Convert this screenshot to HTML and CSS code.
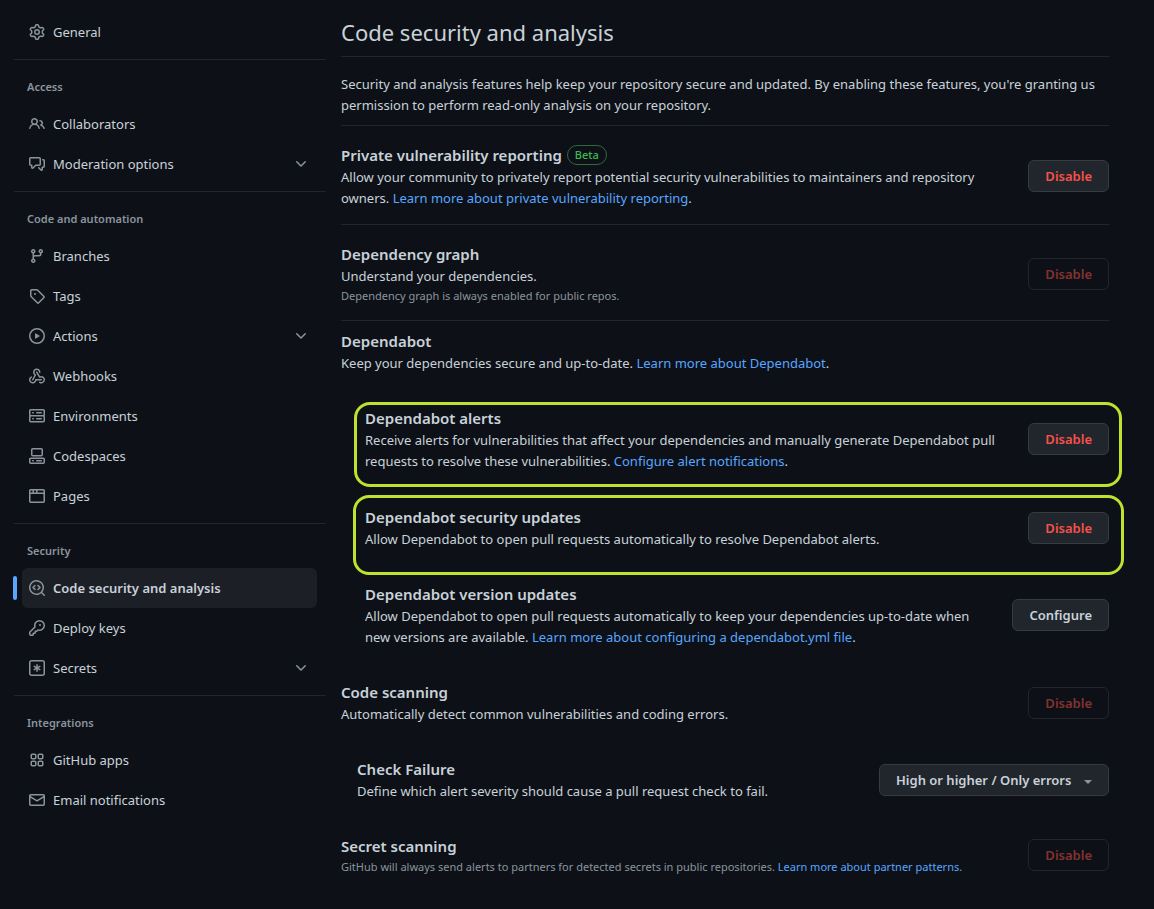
FILE: index.html
```
<!DOCTYPE html>
<html lang="en">
<head>
    <meta charset="UTF-8">
    <meta name="viewport" content="width=device-width, initial-scale=1.0">
    <title>Code security and analysis</title>
    <link rel="stylesheet" href="styles.css">
</head>
<body>
    <div class="layout">
        <nav class="sidebar" aria-label="Settings">
            <ul>
                <li><a href="#"><svg class="icon" viewBox="0 0 16 16"><path d="M8 0a8.2 8.2 0 0 1 .701.031C9.444.095 9.99.645 10.16 1.29l.288 1.107c.018.066.079.158.212.224.231.114.454.243.668.386.123.082.233.09.299.071l1.103-.303c.644-.176 1.392.021 1.82.63.27.385.506.792.704 1.218.315.675.111 1.422-.364 1.891l-.814.806c-.049.048-.098.147-.088.294.016.257.016.515 0 .772-.01.147.038.246.088.294l.814.806c.475.469.679 1.216.364 1.891a7.977 7.977 0 0 1-.704 1.217c-.428.61-1.176.807-1.82.63l-1.102-.302c-.067-.019-.177-.011-.3.071a5.909 5.909 0 0 1-.668.386c-.133.066-.194.158-.211.224l-.29 1.106c-.168.646-.715 1.196-1.458 1.26a8.006 8.006 0 0 1-1.402 0c-.743-.064-1.289-.614-1.458-1.26l-.289-1.106c-.018-.066-.079-.158-.212-.224a5.738 5.738 0 0 1-.668-.386c-.123-.082-.233-.09-.299-.071l-1.103.303c-.644.176-1.392-.021-1.82-.63a8.12 8.12 0 0 1-.704-1.218c-.315-.675-.111-1.422.363-1.891l.815-.806c.05-.048.098-.147.088-.294a6.214 6.214 0 0 1 0-.772c.01-.147-.038-.246-.088-.294l-.815-.806C.635 6.045.431 5.298.746 4.623a7.92 7.92 0 0 1 .704-1.217c.428-.61 1.176-.807 1.82-.63l1.102.302c.067.019.177.011.3-.071.214-.143.437-.272.668-.386.133-.066.194-.158.211-.224l.29-1.106C6.009.645 6.556.095 7.299.03 7.53.01 7.764 0 8 0Zm-.571 1.525c-.036.003-.108.036-.137.146l-.289 1.105c-.147.561-.549.967-.998 1.189-.173.086-.34.183-.5.29-.417.278-.97.423-1.529.27l-1.103-.303c-.109-.03-.175.016-.195.045-.22.312-.412.644-.573.99-.014.031-.021.11.059.19l.815.806c.411.406.562.957.53 1.456a4.709 4.709 0 0 0 0 .582c.032.499-.119 1.05-.53 1.456l-.815.806c-.081.08-.073.159-.059.19.162.346.353.677.573.989.02.03.085.076.195.046l1.102-.303c.56-.153 1.113-.008 1.53.27.161.107.328.204.501.29.447.222.85.629.997 1.189l.289 1.105c.029.109.101.143.137.146a6.6 6.6 0 0 0 1.142 0c.036-.003.108-.036.137-.146l.289-1.105c.147-.561.549-.967.998-1.189.173-.086.34-.183.5-.29.417-.278.97-.423 1.529-.27l1.103.303c.109.029.175-.016.195-.045.22-.313.411-.644.573-.99.014-.031.021-.11-.059-.19l-.815-.806c-.411-.406-.562-.957-.53-1.456a4.709 4.709 0 0 0 0-.582c-.032-.499.119-1.05.53-1.456l.815-.806c.081-.08.073-.159.059-.19a6.464 6.464 0 0 0-.573-.989c-.02-.03-.085-.076-.195-.046l-1.102.303c-.56.153-1.113.008-1.53-.27a4.44 4.44 0 0 0-.501-.29c-.447-.222-.85-.629-.997-1.189l-.289-1.105c-.029-.11-.101-.143-.137-.146a6.6 6.6 0 0 0-1.142 0ZM11 8a3 3 0 1 1-6 0 3 3 0 0 1 6 0ZM9.5 8a1.5 1.5 0 1 0-3.001.001A1.5 1.5 0 0 0 9.5 8Z"/></svg>General</a></li>
            </ul>

            <h2>Access</h2>
            <ul>
                <li><a href="#"><svg class="icon" viewBox="0 0 16 16"><path d="M2 5.5a3.5 3.5 0 1 1 5.898 2.549 5.508 5.508 0 0 1 3.034 4.084.75.75 0 1 1-1.482.235 4.001 4.001 0 0 0-7.9 0 .75.75 0 0 1-1.482-.236A5.507 5.507 0 0 1 3.102 8.05 3.493 3.493 0 0 1 2 5.5ZM11 4a3.001 3.001 0 0 1 2.22 5.018 5.01 5.01 0 0 1 2.56 3.012.749.749 0 0 1-.885.954.752.752 0 0 1-.549-.514 3.507 3.507 0 0 0-2.522-2.372.75.75 0 0 1-.574-.73v-.352a.75.75 0 0 1 .416-.672A1.5 1.5 0 0 0 11 5.5.75.75 0 0 1 11 4Zm-5.5-.5a2 2 0 1 0-.001 3.999A2 2 0 0 0 5.5 3.5Z"/></svg>Collaborators</a></li>
                <li><a href="#"><svg class="icon" viewBox="0 0 16 16"><path d="M1.75 1h8.5c.966 0 1.75.784 1.75 1.75v5.5A1.75 1.75 0 0 1 10.25 10H7.061l-2.574 2.573A1.458 1.458 0 0 1 2 11.543V10h-.25A1.75 1.75 0 0 1 0 8.25v-5.5C0 1.784.784 1 1.75 1ZM1.5 2.75v5.5c0 .138.112.25.25.25h1a.75.75 0 0 1 .75.75v2.19l2.72-2.72a.749.749 0 0 1 .53-.22h3.5a.25.25 0 0 0 .25-.25v-5.5a.25.25 0 0 0-.25-.25h-8.5a.25.25 0 0 0-.25.25Zm13 2a.25.25 0 0 0-.25-.25h-.5a.75.75 0 0 1 0-1.5h.5c.966 0 1.75.784 1.75 1.75v5.5A1.75 1.75 0 0 1 14.25 12H14v1.543a1.458 1.458 0 0 1-2.487 1.03L9.22 12.28a.749.749 0 0 1 .326-1.275.749.749 0 0 1 .734.215l2.22 2.22v-2.19a.75.75 0 0 1 .75-.75h1a.25.25 0 0 0 .25-.25Z"/></svg>Moderation options<svg class="icon chevron" viewBox="0 0 16 16"><path d="M12.78 5.22a.749.749 0 0 1 0 1.06l-4.25 4.25a.749.749 0 0 1-1.06 0L3.22 6.28a.749.749 0 1 1 1.06-1.06L8 8.939l3.72-3.719a.749.749 0 0 1 1.06 0Z"/></svg></a></li>
            </ul>

            <h2>Code and automation</h2>
            <ul>
                <li><a href="#"><svg class="icon" viewBox="0 0 16 16"><path d="M9.5 3.25a2.25 2.25 0 1 1 3 2.122V6A2.5 2.5 0 0 1 10 8.5H6a1 1 0 0 0-1 1v1.128a2.251 2.251 0 1 1-1.5 0V5.372a2.25 2.25 0 1 1 1.5 0v1.836A2.493 2.493 0 0 1 6 7h4a1 1 0 0 0 1-1v-.628A2.25 2.25 0 0 1 9.5 3.25Zm-6 0a.75.75 0 1 0 1.5 0 .75.75 0 0 0-1.5 0Zm8.25-.75a.75.75 0 1 0 0 1.5.75.75 0 0 0 0-1.5ZM4.25 12a.75.75 0 1 0 0 1.5.75.75 0 0 0 0-1.5Z"/></svg>Branches</a></li>
                <li><a href="#"><svg class="icon" viewBox="0 0 16 16"><path d="M1 7.775V2.75C1 1.784 1.784 1 2.75 1h5.025c.464 0 .91.184 1.238.513l6.25 6.25a1.75 1.75 0 0 1 0 2.474l-5.026 5.026a1.75 1.75 0 0 1-2.474 0l-6.25-6.25A1.752 1.752 0 0 1 1 7.775Zm1.5 0c0 .066.026.13.073.177l6.25 6.25a.25.25 0 0 0 .354 0l5.025-5.025a.25.25 0 0 0 0-.354l-6.25-6.25a.25.25 0 0 0-.177-.073H2.75a.25.25 0 0 0-.25.25ZM6 5a1 1 0 1 1 0 2 1 1 0 0 1 0-2Z"/></svg>Tags</a></li>
                <li><a href="#"><svg class="icon" viewBox="0 0 16 16"><path d="M8 0a8 8 0 1 1 0 16A8 8 0 0 1 8 0ZM1.5 8a6.5 6.5 0 1 0 13 0 6.5 6.5 0 0 0-13 0Zm4.879-2.773 4.264 2.559a.25.25 0 0 1 0 .428l-4.264 2.559A.25.25 0 0 1 6 10.559V5.442a.25.25 0 0 1 .379-.215Z"/></svg>Actions<svg class="icon chevron" viewBox="0 0 16 16"><path d="M12.78 5.22a.749.749 0 0 1 0 1.06l-4.25 4.25a.749.749 0 0 1-1.06 0L3.22 6.28a.749.749 0 1 1 1.06-1.06L8 8.939l3.72-3.719a.749.749 0 0 1 1.06 0Z"/></svg></a></li>
                <li><a href="#"><svg class="icon" viewBox="0 0 16 16"><path d="M5.5 4.25a2.25 2.25 0 0 1 4.5 0 .75.75 0 0 0 1.5 0 3.75 3.75 0 1 0-6.14 2.889l-2.272 4.258a.75.75 0 0 0 1.324.706L7 7.25a.75.75 0 0 0-.309-1.015A2.25 2.25 0 0 1 5.5 4.25Z"/><path d="M7.364 3.607a.75.75 0 0 1 1.03.257l2.608 4.349a3.75 3.75 0 1 1-.628 6.785.75.75 0 0 1 .752-1.299 2.25 2.25 0 1 0-.033-3.88.75.75 0 0 1-1.03-.256L7.107 4.636a.75.75 0 0 1 .257-1.03Z"/><path d="M2.9 8.776A.75.75 0 0 1 2.625 9.8 2.25 2.25 0 1 0 6 11.75a.75.75 0 0 1 .75-.751h5.5a.75.75 0 0 1 0 1.5H7.425a3.751 3.751 0 1 1-5.55-3.998.75.75 0 0 1 1.024.274Z"/></svg>Webhooks</a></li>
                <li><a href="#"><svg class="icon" viewBox="0 0 16 16"><path d="M1.75 1h12.5c.966 0 1.75.784 1.75 1.75v4c0 .372-.116.717-.314 1 .198.283.314.628.314 1v4a1.75 1.75 0 0 1-1.75 1.75H1.75A1.75 1.75 0 0 1 0 12.75v-4c0-.358.109-.707.314-1a1.739 1.739 0 0 1-.314-1v-4C0 1.784.784 1 1.75 1ZM1.5 2.75v4c0 .138.112.25.25.25h12.5a.25.25 0 0 0 .25-.25v-4a.25.25 0 0 0-.25-.25H1.75a.25.25 0 0 0-.25.25Zm.25 5.75a.25.25 0 0 0-.25.25v4c0 .138.112.25.25.25h12.5a.25.25 0 0 0 .25-.25v-4a.25.25 0 0 0-.25-.25ZM7 4.75A.75.75 0 0 1 7.75 4h4.5a.75.75 0 0 1 0 1.5h-4.5A.75.75 0 0 1 7 4.75ZM7.75 10h4.5a.75.75 0 0 1 0 1.5h-4.5a.75.75 0 0 1 0-1.5ZM3 4.75A.75.75 0 0 1 3.75 4h.5a.75.75 0 0 1 0 1.5h-.5A.75.75 0 0 1 3 4.75ZM3.75 10h.5a.75.75 0 0 1 0 1.5h-.5a.75.75 0 0 1 0-1.5Z"/></svg>Environments</a></li>
                <li><a href="#"><svg class="icon" viewBox="0 0 16 16"><path d="M0 11.25c0-.966.784-1.75 1.75-1.75h12.5c.966 0 1.75.784 1.75 1.75v3A1.75 1.75 0 0 1 14.25 16H1.75A1.75 1.75 0 0 1 0 14.25Zm2-9.5C2 .784 2.784 0 3.75 0h8.5C13.216 0 14 .784 14 1.75v5a1.75 1.75 0 0 1-1.75 1.75h-8.5A1.75 1.75 0 0 1 2 6.75Zm1.75-.25a.25.25 0 0 0-.25.25v5c0 .138.112.25.25.25h8.5a.25.25 0 0 0 .25-.25v-5a.25.25 0 0 0-.25-.25Zm-2 9.5a.25.25 0 0 0-.25.25v3c0 .138.112.25.25.25h12.5a.25.25 0 0 0 .25-.25v-3a.25.25 0 0 0-.25-.25Z"/><path d="M7 12.75a.75.75 0 0 1 .75-.75h4.5a.75.75 0 0 1 0 1.5h-4.5a.75.75 0 0 1-.75-.75Zm-4 0a.75.75 0 0 1 .75-.75h.5a.75.75 0 0 1 0 1.5h-.5a.75.75 0 0 1-.75-.75Z"/></svg>Codespaces</a></li>
                <li><a href="#"><svg class="icon" viewBox="0 0 16 16"><path d="M0 2.75C0 1.784.784 1 1.75 1h12.5c.966 0 1.75.784 1.75 1.75v10.5A1.75 1.75 0 0 1 14.25 15H1.75A1.75 1.75 0 0 1 0 13.25ZM14.5 6h-13v7.25c0 .138.112.25.25.25h12.5a.25.25 0 0 0 .25-.25Zm-6-3.5v2h6V2.75a.25.25 0 0 0-.25-.25ZM5 2.5v2h2v-2Zm-3.25 0a.25.25 0 0 0-.25.25V4.5h2v-2Z"/></svg>Pages</a></li>
            </ul>

            <h2>Security</h2>
            <ul>
                <li class="current"><a href="#" aria-current="page"><svg class="icon" viewBox="0 0 16 16"><path d="M8.47 4.97a.75.75 0 0 0 0 1.06L9.94 7.5 8.47 8.97a.75.75 0 1 0 1.06 1.06l2-2a.75.75 0 0 0 0-1.06l-2-2a.75.75 0 0 0-1.06 0ZM6.53 6.03a.75.75 0 0 0-1.06-1.06l-2 2a.75.75 0 0 0 0 1.06l2 2a.75.75 0 1 0 1.06-1.06L5.06 7.5l1.47-1.47Z"/><path d="M12.246 13.307a7.501 7.501 0 1 1 1.06-1.06l2.474 2.473a.749.749 0 1 1-1.06 1.06ZM1.5 7.5a6.002 6.002 0 0 0 3.608 5.504 6.002 6.002 0 0 0 6.486-1.117.748.748 0 0 1 .292-.293A6 6 0 1 0 1.5 7.5Z"/></svg>Code security and analysis</a></li>
                <li><a href="#"><svg class="icon" viewBox="0 0 16 16"><path d="M10.5 0a5.499 5.499 0 1 1-1.288 10.848l-.932.932a.749.749 0 0 1-.53.22H7v.75a.749.749 0 0 1-.22.53l-.5.5a.749.749 0 0 1-.53.22H5v.75a.749.749 0 0 1-.22.53l-.5.5a.749.749 0 0 1-.53.22h-2A1.75 1.75 0 0 1 0 14.25v-2c0-.199.079-.389.22-.53l4.932-4.932A5.5 5.5 0 0 1 10.5 0Zm-4 5.5c-.001.431.069.86.205 1.269a.75.75 0 0 1-.181.768L1.5 12.56v1.69c0 .138.112.25.25.25h1.69l.06-.06v-1.19a.75.75 0 0 1 .75-.75h1.19l.06-.06v-1.19a.75.75 0 0 1 .75-.75h1.19l1.023-1.025a.75.75 0 0 1 .768-.18A4 4 0 1 0 6.5 5.5ZM11 6a1 1 0 1 1 0-2 1 1 0 0 1 0 2Z"/></svg>Deploy keys</a></li>
                <li><a href="#"><svg class="icon" viewBox="0 0 16 16"><path d="M0 2.75A2.75 2.75 0 0 1 2.75 0h10.5A2.75 2.75 0 0 1 16 2.75v10.5A2.75 2.75 0 0 1 13.25 16H2.75A2.75 2.75 0 0 1 0 13.25ZM2.75 1.5c-.69 0-1.25.56-1.25 1.25v10.5c0 .69.56 1.25 1.25 1.25h10.5c.69 0 1.25-.56 1.25-1.25V2.75c0-.69-.56-1.25-1.25-1.25Z"/><path d="M8 4a.75.75 0 0 1 .75.75V6.7l1.69-.975a.75.75 0 0 1 .75 1.3L9.5 8l1.69.976a.75.75 0 0 1-.75 1.298L8.75 9.3v1.951a.75.75 0 0 1-1.5 0V9.299l-1.69.976a.75.75 0 0 1-.75-1.3L6.5 8l-1.69-.975a.75.75 0 0 1 .75-1.3l1.69.976V4.75A.75.75 0 0 1 8 4Z"/></svg>Secrets<svg class="icon chevron" viewBox="0 0 16 16"><path d="M12.78 5.22a.749.749 0 0 1 0 1.06l-4.25 4.25a.749.749 0 0 1-1.06 0L3.22 6.28a.749.749 0 1 1 1.06-1.06L8 8.939l3.72-3.719a.749.749 0 0 1 1.06 0Z"/></svg></a></li>
            </ul>

            <h2>Integrations</h2>
            <ul>
                <li><a href="#"><svg class="icon" viewBox="0 0 16 16"><path d="M1.5 3.25c0-.966.784-1.75 1.75-1.75h2.5c.966 0 1.75.784 1.75 1.75v2.5A1.75 1.75 0 0 1 5.75 7.5h-2.5A1.75 1.75 0 0 1 1.5 5.75Zm7 0c0-.966.784-1.75 1.75-1.75h2.5c.966 0 1.75.784 1.75 1.75v2.5a1.75 1.75 0 0 1-1.75 1.75h-2.5A1.75 1.75 0 0 1 8.5 5.75Zm-7 7c0-.966.784-1.75 1.75-1.75h2.5c.966 0 1.75.784 1.75 1.75v2.5a1.75 1.75 0 0 1-1.75 1.75h-2.5a1.75 1.75 0 0 1-1.75-1.75Zm7 0c0-.966.784-1.75 1.75-1.75h2.5c.966 0 1.75.784 1.75 1.75v2.5a1.75 1.75 0 0 1-1.75 1.75h-2.5a1.75 1.75 0 0 1-1.75-1.75ZM3.25 3a.25.25 0 0 0-.25.25v2.5c0 .138.112.25.25.25h2.5A.25.25 0 0 0 6 5.75v-2.5A.25.25 0 0 0 5.75 3Zm7 0a.25.25 0 0 0-.25.25v2.5c0 .138.112.25.25.25h2.5a.25.25 0 0 0 .25-.25v-2.5a.25.25 0 0 0-.25-.25Zm-7 7a.25.25 0 0 0-.25.25v2.5c0 .138.112.25.25.25h2.5a.25.25 0 0 0 .25-.25v-2.5a.25.25 0 0 0-.25-.25Zm7 0a.25.25 0 0 0-.25.25v2.5c0 .138.112.25.25.25h2.5a.25.25 0 0 0 .25-.25v-2.5a.25.25 0 0 0-.25-.25Z"/></svg>GitHub apps</a></li>
                <li><a href="#"><svg class="icon" viewBox="0 0 16 16"><path d="M1.75 2h12.5c.966 0 1.75.784 1.75 1.75v8.5A1.75 1.75 0 0 1 14.25 14H1.75A1.75 1.75 0 0 1 0 12.25v-8.5C0 2.784.784 2 1.75 2ZM1.5 12.251c0 .138.112.25.25.25h12.5a.25.25 0 0 0 .25-.25V5.809L8.38 9.397a.75.75 0 0 1-.76 0L1.5 5.809v6.442Zm13-8.181v-.32a.25.25 0 0 0-.25-.25H1.75a.25.25 0 0 0-.25.25v.32L8 7.88Z"/></svg>Email notifications</a></li>
            </ul>
        </nav>

        <main class="content">
            <h1>Code security and analysis</h1>
            <p class="intro">Security and analysis features help keep your repository secure and updated. By enabling these features, you're granting us permission to perform read-only analysis on your repository.</p>

            <section class="row divided">
                <div class="text">
                    <h3>Private vulnerability reporting <span class="label">Beta</span></h3>
                    <p>Allow your community to privately report potential security vulnerabilities to maintainers and repository owners. <a href="#">Learn more about private vulnerability reporting</a>.</p>
                </div>
                <button class="btn btn-danger" type="button">Disable</button>
            </section>

            <section class="row divided">
                <div class="text">
                    <h3>Dependency graph</h3>
                    <p>Understand your dependencies.</p>
                    <p class="note">Dependency graph is always enabled for public repos.</p>
                </div>
                <button class="btn btn-danger" type="button" disabled>Disable</button>
            </section>

            <div class="group">
                <section class="row">
                    <div class="text">
                        <h3>Dependabot</h3>
                        <p>Keep your dependencies secure and up-to-date. <a href="#">Learn more about Dependabot</a>.</p>
                    </div>
                </section>

                <section class="row nested marked marked-alerts">
                    <div class="text">
                        <h3>Dependabot alerts</h3>
                        <p>Receive alerts for vulnerabilities that affect your dependencies and manually generate Dependabot pull requests to resolve these vulnerabilities. <a href="#">Configure alert notifications</a>.</p>
                    </div>
                    <button class="btn btn-danger" type="button">Disable</button>
                </section>

                <section class="row nested marked marked-updates">
                    <div class="text">
                        <h3>Dependabot security updates</h3>
                        <p>Allow Dependabot to open pull requests automatically to resolve Dependabot alerts.</p>
                    </div>
                    <button class="btn btn-danger" type="button">Disable</button>
                </section>

                <section class="row nested">
                    <div class="text">
                        <h3>Dependabot version updates</h3>
                        <p>Allow Dependabot to open pull requests automatically to keep your dependencies up-to-date when new versions are available. <a href="#">Learn more about configuring a dependabot.yml file</a>.</p>
                    </div>
                    <button class="btn" type="button">Configure</button>
                </section>

                <section class="row">
                    <div class="text">
                        <h3>Code scanning</h3>
                        <p>Automatically detect common vulnerabilities and coding errors.</p>
                    </div>
                    <button class="btn btn-danger" type="button" disabled>Disable</button>
                </section>

                <section class="row check">
                    <div class="text">
                        <h3><label for="severity">Check Failure</label></h3>
                        <p>Define which alert severity should cause a pull request check to fail.</p>
                    </div>
                    <div class="select-wrap">
                        <select class="btn" id="severity">
                            <option>High or higher / Only errors</option>
                        </select>
                    </div>
                </section>

                <section class="row">
                    <div class="text">
                        <h3>Secret scanning</h3>
                        <p class="note">GitHub will always send alerts to partners for detected secrets in public repositories. <a href="#">Learn more about partner patterns.</a></p>
                    </div>
                    <button class="btn btn-danger" type="button" disabled>Disable</button>
                </section>
            </div>
        </main>
    </div>
</body>
</html>
```
FILE: styles.css
```
* {
    margin: 0;
    padding: 0;
    box-sizing: border-box;
}

body {
    background-color: #0d1117;
    color: #c9d1d9;
    font-family: "Segoe UI", "Noto Sans", sans-serif;
    font-size: 13px;
    line-height: 21px;
}

a {
    color: #58a6ff;
    text-decoration: none;
}

a:hover {
    text-decoration: underline;
}

.layout {
    display: flex;
    gap: 15px;
    padding: 12px 45px 20px 14px;
}

/* Sidebar */

.sidebar {
    flex: 0 0 312px;
}

.sidebar ul {
    list-style: none;
    padding: 0 9px 7px 8px;
}

.sidebar h2 {
    border-top: 1px solid #21262d;
    padding: 17px 13px 7px;
    color: #8b949e;
    font-size: 11px;
    font-weight: 600;
    line-height: 20px;
}

.sidebar li {
    position: relative;
    border-radius: 6px;
}

.sidebar li a {
    display: flex;
    align-items: center;
    gap: 8px;
    height: 40px;
    padding: 0 8px 0 7px;
    color: #c9d1d9;
}

.sidebar .current {
    background-color: #1c2026;
    font-weight: 600;
}

.sidebar .current::before {
    content: "";
    position: absolute;
    left: -9px;
    top: 8px;
    width: 4px;
    height: 24px;
    border-radius: 2px;
    background-color: #58a6ff;
}

.icon {
    width: 16px;
    height: 16px;
    flex: none;
    fill: #8b949e;
}

.chevron {
    margin-left: auto;
}

/* Main column */

.content {
    flex: 1;
    min-width: 0;
}

h1 {
    padding: 2px 0 6px;
    border-bottom: 1px solid #21262d;
    font-size: 22px;
    font-weight: 400;
    line-height: 36px;
}

.intro {
    padding: 17px 0 9px;
    border-bottom: 1px solid #21262d;
}

h3 {
    display: flex;
    align-items: center;
    gap: 5px;
    font-size: 15px;
    font-weight: 600;
    line-height: 24px;
}

.row {
    position: relative;
    display: flex;
    align-items: center;
    justify-content: space-between;
    gap: 16px;
}

.divided {
    padding: 17px 0 15px;
    border-bottom: 1px solid #21262d;
}

.group {
    display: flex;
    flex-direction: column;
    gap: 32px;
    padding-top: 8px;
}

.nested {
    padding-left: 24px;
}

.check {
    padding-left: 16px;
}

.note {
    color: #8b949e;
    font-size: 11px;
    line-height: 18px;
}

.label {
    padding: 0 7px;
    border: 1px solid #2c6b3c;
    border-radius: 10px;
    color: #3fb950;
    font-size: 11px;
    font-weight: 500;
    line-height: 18px;
}

/* Outlines drawn round the two highlighted rows */

.marked::before {
    content: "";
    position: absolute;
    border: 3px solid #bfe22f;
    border-radius: 16px;
    pointer-events: none;
}

.marked-alerts {
    padding-bottom: 1px;
}

.marked-alerts::before {
    inset: -4px -13px -14px 13px;
}

.marked-updates::before {
    inset: -10px -15px -25px 12px;
}

/* Buttons */

.btn {
    flex: none;
    height: 32px;
    padding: 0 16px;
    border: 1px solid #363b42;
    border-radius: 6px;
    background-color: #21262d;
    color: #c9d1d9;
    font-family: inherit;
    font-size: 13px;
    font-weight: 600;
    cursor: pointer;
}

.btn-danger {
    color: #f85149;
}

.btn:disabled {
    border-color: #21262d;
    background-color: #0d1117;
    color: #843230;
    cursor: default;
}

.select-wrap {
    position: relative;
    flex: none;
}

select.btn {
    appearance: none;
    padding-right: 36px;
}

.select-wrap::after {
    content: "";
    position: absolute;
    right: 17px;
    top: 16px;
    border: 4px solid transparent;
    border-top-color: #8b949e;
    border-bottom: 0;
    pointer-events: none;
}
```
